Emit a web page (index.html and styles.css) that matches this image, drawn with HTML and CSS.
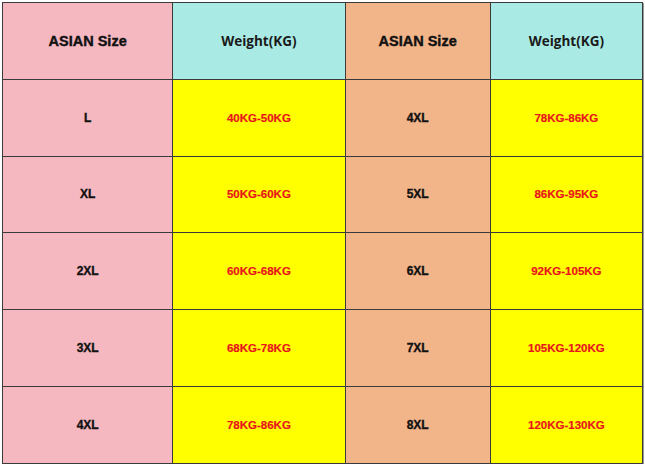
FILE: index.html
```html
<!DOCTYPE html>
<html>
<head>
<meta charset="utf-8">
<link rel="stylesheet" href="styles.css">
</head>
<body>
<div class="frame">
<table class="chart">
<colgroup><col class="c1"><col class="c2"><col class="c3"><col class="c4"></colgroup>
<tr class="head">
<td class="pink size">ASIAN Size</td>
<td class="cyan wt">Weight(KG)</td>
<td class="orange size">ASIAN Size</td>
<td class="cyan wt">Weight(KG)</td>
</tr>
<tr><td class="pink lbl">L</td><td class="yellow val">40KG-50KG</td><td class="orange lbl">4XL</td><td class="yellow val">78KG-86KG</td></tr>
<tr><td class="pink lbl">XL</td><td class="yellow val">50KG-60KG</td><td class="orange lbl">5XL</td><td class="yellow val">86KG-95KG</td></tr>
<tr><td class="pink lbl">2XL</td><td class="yellow val">60KG-68KG</td><td class="orange lbl">6XL</td><td class="yellow val">92KG-105KG</td></tr>
<tr><td class="pink lbl">3XL</td><td class="yellow val">68KG-78KG</td><td class="orange lbl">7XL</td><td class="yellow val">105KG-120KG</td></tr>
<tr><td class="pink lbl">4XL</td><td class="yellow val">78KG-86KG</td><td class="orange lbl">8XL</td><td class="yellow val">120KG-130KG</td></tr>
</table>
</div>
</body>
</html>
```
FILE: styles.css
```css
html, body {
  margin: 0;
  padding: 0;
  background: #ffffff;
}
.frame {
  padding: 2px 0 0 2px;
}
.chart {
  border-collapse: collapse;
  table-layout: fixed;
  width: 641px;
  border: 1px solid #3a3a3a;
  box-shadow: 1px 1px 0 #9a9a9a;
  font-family: "Liberation Sans", Arial, sans-serif;
}
.c1 { width: 170px; }
.c2 { width: 172px; }
.c3 { width: 145px; }
.c4 { width: 152px; }
.chart td {
  border: 1px solid #3a3a3a;
  height: 75.8px;
  padding: 0;
  text-align: center;
  vertical-align: middle;
}
.pink { background: #f5b8c0; }
.cyan { background: #a9ebe4; }
.orange { background: #f2b58a; }
.yellow { background: #ffff00; }
.size {
  font-weight: bold;
  font-size: 14.5px;
  color: #111;
  -webkit-text-stroke: 0.4px #111;
}
.wt {
  font-family: "Open Sans", "Noto Sans", sans-serif;
  font-weight: 700;
  font-size: 13.5px;
  color: #1a1a1a;
}
.lbl {
  font-weight: bold;
  font-size: 12px;
  color: #111;
  -webkit-text-stroke: 0.35px #111;
}
.val {
  font-weight: bold;
  font-size: 11.5px;
  color: #e8151c;
  -webkit-text-stroke: 0.2px #e8151c;
}
```
